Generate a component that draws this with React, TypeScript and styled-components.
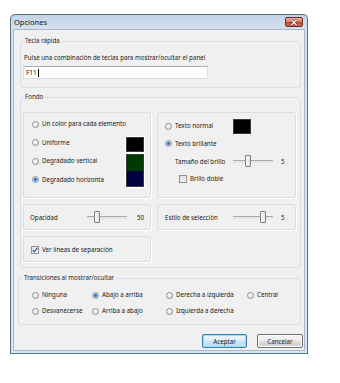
import React from 'react';
import styled, { createGlobalStyle } from 'styled-components';

const GlobalStyle = createGlobalStyle`
  * { box-sizing: border-box; }
  html, body { margin: 0; padding: 0; background: #ffffff; }
  body {
    font-family: "Noto Sans", "Open Sans", sans-serif;
    font-size: 6.2px;
    color: #202020;
  }
`;

const Window = styled.div`
  margin: 14px 0 0 10px;
  width: 298px;
  height: 340px;
  display: flex;
  flex-direction: column;
  border: 1px solid #5b6c80;
  border-bottom-color: #3e7c8e;
  border-radius: 5px 5px 0 0;
  padding: 0 2px 2px;
  background: linear-gradient(to bottom, #c3d4e9 0px, #d4e1f0 14px, #dae5f1 100%);
`;

const TitleBar = styled.div`
  height: 14px;
  display: flex;
  align-items: flex-start;
  justify-content: space-between;
  padding: 0 0 0 1px;
`;

const Title = styled.span`
  font-size: 7.5px;
  line-height: 14px;
  color: #0f1620;
`;

const CloseButton = styled.div`
  width: 18px;
  height: 10px;
  margin: 2px 2px 0 0;
  border: 1px solid #6a2d25;
  border-radius: 2px;
  display: flex;
  align-items: center;
  justify-content: center;
  background: linear-gradient(to bottom, #eab0a3 0%, #dc7a66 45%, #c8442c 55%, #d2664f 100%);
`;

const Body = styled.div`
  flex: 1;
  display: flex;
  flex-direction: column;
  background: #f0f0f0;
  border: 1px solid #a9b7c8;
  padding: 7px 3px 0 6px;
`;

const GroupBox = styled.fieldset<{ $top?: number; $shift?: number }>`
  margin: ${(p) => p.$top ?? 0}px 0 0 ${(p) => -(p.$shift ?? 0)}px;
  padding: 0;
  min-width: 0;
  border: 1px solid #d5dfe5;
  border-radius: 3px;
`;

const Legend = styled.legend<{ $indent?: number }>`
  margin-left: ${(p) => p.$indent ?? 2}px;
  padding: 0 2px;
  line-height: 8px;
  color: #1e1e1e;
`;

const HotkeyContent = styled.div`
  padding: 9px 0 8px 3px;
`;

const Caption = styled.div`
  line-height: 8px;
  white-space: nowrap;
`;

const KeyInput = styled.div`
  margin-top: 4px;
  margin-left: -1px;
  width: 185px;
  height: 13px;
  display: flex;
  align-items: center;
  padding-left: 2px;
  background: #ffffff;
  border: 1px solid #dbdfe6;
  border-top-color: #abadb3;
  font-size: 6.5px;
`;

const Caret = styled.span`
  display: inline-block;
  width: 1px;
  height: 8px;
  margin-left: 1px;
  background: #000000;
`;

const FondoGrid = styled.div`
  display: grid;
  grid-template-columns: 128px 139px;
  grid-template-rows: 86px 26px 26px;
  gap: 6px;
  padding: 11px 0 5px 2px;
`;

const Panel = styled.div`
  border: 1px solid #d5dfe5;
  border-radius: 3px;
  box-shadow: 1px 1px 0 #ffffff;
`;

const ColorPanel = styled(Panel)`
  display: grid;
  grid-template-columns: 94px 18px;
  grid-template-rows: repeat(4, 18.67px);
  padding: 1.7px 0 0 8px;
  align-items: center;
`;

const TextPanel = styled(Panel)`
  display: grid;
  grid-template-rows: repeat(4, 17.5px);
  padding: 4.5px 0 0 7px;
  align-items: center;
`;

const SliderPanel = styled(Panel)<{ $pad: number }>`
  display: flex;
  align-items: center;
  padding-left: ${(p) => p.$pad}px;
`;

const CheckPanel = styled(Panel)`
  display: flex;
  align-items: center;
  padding: 2px 0 0 7px;
`;

const Option = styled.label<{ $indent?: number }>`
  grid-column: 1;
  display: flex;
  align-items: center;
  gap: 3px;
  height: 10px;
  margin-left: ${(p) => p.$indent ?? 0}px;
  white-space: nowrap;
  line-height: 8px;
`;

const TransitionOption = styled(Option)`
  grid-column: auto;
`;

const OptionText = styled.span<{ $clip?: number }>`
  ${(p) => (p.$clip ? `max-width: ${p.$clip}px; overflow: hidden;` : '')}
`;

const RadioCircle = styled.span<{ $checked?: boolean }>`
  flex: none;
  width: 7px;
  height: 7px;
  border-radius: 50%;
  border: 1px solid #8e8f8f;
  background: ${(p) =>
    p.$checked
      ? 'radial-gradient(circle, #1f5fc4 0, #3d85dc 1.3px, #a9cdf3 2px, #eef0f2 2.4px, #d9dcdf 100%)'
      : 'radial-gradient(circle at 40% 35%, #fbfbfb 0, #e6e6e6 60%, #cfd1d3 100%)'};
`;

const CheckSquare = styled.span`
  flex: none;
  width: 8px;
  height: 8px;
  border: 1px solid #8e8f8f;
  background: linear-gradient(to bottom right, #dcdcdc, #f8f8f8);
  display: flex;
  align-items: center;
  justify-content: center;
`;

const Swatch = styled.div<{ $color: string; $row: number; $span?: boolean }>`
  grid-column: 2;
  grid-row: ${(p) => p.$row} / span ${(p) => (p.$span ? 2 : 1)};
  width: 18px;
  height: ${(p) => (p.$span ? 33 : 15)}px;
  align-self: ${(p) => (p.$span ? 'center' : 'end')};
  border: 1px solid #3a3a3a;
  box-shadow: 0 0 0 1px #ffffff;
  background: ${(p) => p.$color};
`;

const SmallSwatch = styled.div`
  width: 18px;
  height: 15px;
  border: 1px solid #3a3a3a;
  background: #000000;
`;

const RowSplit = styled.div`
  display: grid;
  grid-template-columns: 68px 18px;
  align-items: center;
`;

const SliderRow = styled.div<{ $indent?: number }>`
  display: flex;
  align-items: center;
  margin-left: ${(p) => p.$indent ?? 0}px;
`;

const SliderLabel = styled.span<{ $width: number }>`
  width: ${(p) => p.$width}px;
  white-space: nowrap;
`;

const Track = styled.div`
  position: relative;
  width: 40px;
  height: 12px;
  flex: none;
  &::before {
    content: '';
    position: absolute;
    left: 0;
    right: 0;
    top: 5px;
    height: 2px;
    background: #e3e5e7;
    border-top: 1px solid #a9abad;
  }
`;

const Thumb = styled.span`
  position: absolute;
  top: 0;
  width: 6px;
  height: 12px;
  margin-left: -3px;
  border: 1px solid #7d7f81;
  border-radius: 1px;
  background: linear-gradient(to right, #fbfbfb, #e2e3e4);
`;

const ValueText = styled.span<{ $gap: number }>`
  margin-left: ${(p) => p.$gap}px;
`;

const TransitionGrid = styled.div`
  display: grid;
  grid-template-columns: 60px 74px 81px auto;
  row-gap: 6px;
  padding: 8px 0 8px 13px;
`;

const ButtonRow = styled.div`
  display: flex;
  justify-content: flex-end;
  gap: 10px;
  margin: 9px -2px 0 0;
`;

const Button = styled.button<{ $primary?: boolean }>`
  width: ${(p) => (p.$primary ? 45 : 46)}px;
  height: 14px;
  padding: 0;
  font-family: inherit;
  font-size: 6.2px;
  color: #1e1e1e;
  border-radius: 2px;
  border: 1px solid ${(p) => (p.$primary ? '#3c7fb1' : '#707070')};
  box-shadow: ${(p) => (p.$primary ? 'inset 0 0 0 1px #8ee2f7' : 'inset 0 0 0 1px #fbfbfb')};
  background: ${(p) =>
    p.$primary
      ? 'linear-gradient(to bottom, #ecf6fc 0%, #ddeefb 50%, #c7e3f8 51%, #bcdef6 100%)'
      : 'linear-gradient(to bottom, #f2f2f2 0%, #ebebeb 50%, #dddddd 51%, #cfcfcf 100%)'};
`;

const Radio = ({ label, checked, clip }: { label: string; checked?: boolean; clip?: number }) => (
  <Option>
    <RadioCircle $checked={checked} />
    <OptionText $clip={clip}>{label}</OptionText>
  </Option>
);

const TransitionRadio = ({ label, checked }: { label: string; checked?: boolean }) => (
  <TransitionOption>
    <RadioCircle $checked={checked} />
    <span>{label}</span>
  </TransitionOption>
);

const Check = ({ label, checked, indent }: { label: string; checked?: boolean; indent?: number }) => (
  <Option $indent={indent}>
    <CheckSquare>
      {checked && (
        <svg width="6" height="6" viewBox="0 0 6 6">
          <path d="M0.8 3.2 L2.3 4.8 L5.3 0.8" fill="none" stroke="#2a58a8" strokeWidth="1.2" />
        </svg>
      )}
    </CheckSquare>
    <span>{label}</span>
  </Option>
);

const Slider = ({ value }: { value: number }) => (
  <Track>
    <Thumb style={{ left: `${value * 100}%` }} />
  </Track>
);

const App: React.FC = () => {
  return (
    <>
      <GlobalStyle />
      <Window>
        <TitleBar>
          <Title>Opciones</Title>
          <CloseButton>
            <svg width="8" height="7" viewBox="0 0 8 7">
              <path d="M1.5 1 L6.5 6 M6.5 1 L1.5 6" stroke="#5a1f18" strokeWidth="2.4" />
              <path d="M1.5 1 L6.5 6 M6.5 1 L1.5 6" stroke="#ffffff" strokeWidth="1.3" />
            </svg>
          </CloseButton>
        </TitleBar>
        <Body>
          <GroupBox>
            <Legend>Tecla rápida</Legend>
            <HotkeyContent>
              <Caption>Pulse una combinación de teclas para mostrar/ocultar el panel</Caption>
              <KeyInput>
                F11
                <Caret />
              </KeyInput>
            </HotkeyContent>
          </GroupBox>

          <GroupBox $top={5}>
            <Legend>Fondo</Legend>
            <FondoGrid>
              <ColorPanel>
                <Radio label="Un color para cada elemento" />
                <Radio label="Uniforme" />
                <Radio label="Degradado vertical" />
                <Radio label="Degradado horizontal" checked clip={62} />
                <Swatch $color="#000000" $row={2} />
                <Swatch $color="linear-gradient(to bottom, #003a00 50%, #00003f 50%)" $row={3} $span />
              </ColorPanel>
              <TextPanel>
                <RowSplit>
                  <Radio label="Texto normal" />
                  <SmallSwatch />
                </RowSplit>
                <Radio label="Texto brillante" checked />
                <SliderRow $indent={10}>
                  <SliderLabel $width={58}>Tamaño del brillo</SliderLabel>
                  <Slider value={0.375} />
                  <ValueText $gap={8}>5</ValueText>
                </SliderRow>
                <Check label="Brillo doble" indent={14} />
              </TextPanel>
              <SliderPanel $pad={6}>
                <SliderLabel $width={57}>Opacidad</SliderLabel>
                <Slider value={0.25} />
                <ValueText $gap={10}>50</ValueText>
              </SliderPanel>
              <SliderPanel $pad={7}>
                <SliderLabel $width={68}>Estilo de selección</SliderLabel>
                <Slider value={0.75} />
                <ValueText $gap={8}>5</ValueText>
              </SliderPanel>
              <CheckPanel>
                <Check label="Ver líneas de separación" checked />
              </CheckPanel>
            </FondoGrid>
          </GroupBox>

          <GroupBox $top={6} $shift={2}>
            <Legend $indent={3}>Transiciones al mostrar/ocultar</Legend>
            <TransitionGrid>
              <TransitionRadio label="Ninguna" />
              <TransitionRadio label="Abajo a arriba" checked />
              <TransitionRadio label="Derecha a izquierda" />
              <TransitionRadio label="Central" />
              <TransitionRadio label="Desvanecerse" />
              <TransitionRadio label="Arriba a abajo" />
              <TransitionRadio label="Izquierda a derecha" />
            </TransitionGrid>
          </GroupBox>

          <ButtonRow>
            <Button $primary>Aceptar</Button>
            <Button>Cancelar</Button>
          </ButtonRow>
        </Body>
      </Window>
    </>
  );
};

export default App;
